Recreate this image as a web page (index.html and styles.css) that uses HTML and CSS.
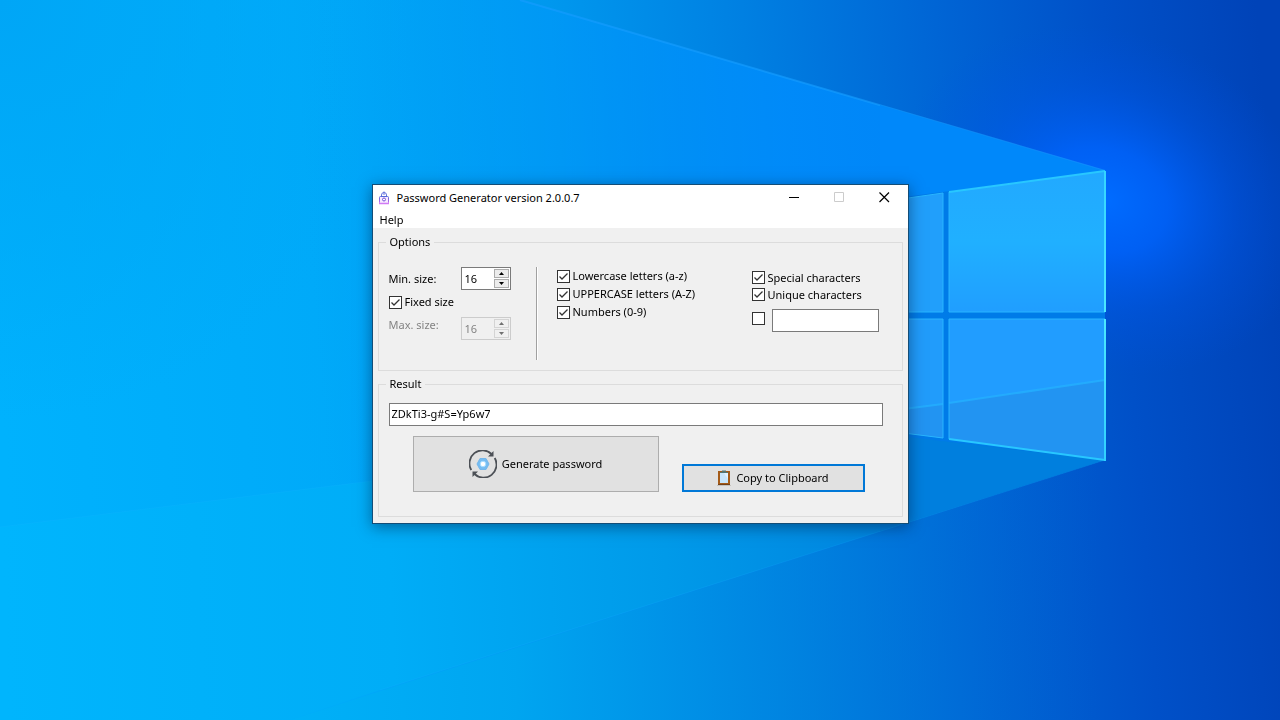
FILE: index.html
```html
<!DOCTYPE html>
<html lang="en">
<head>
<meta charset="utf-8">
<title>Password Generator</title>
<link rel="stylesheet" href="styles.css">
</head>
<body>
<svg class="wallpaper" viewBox="0 0 1280 720" preserveAspectRatio="xMidYMid slice" aria-hidden="true">
  <defs>
    <linearGradient id="sky" gradientUnits="userSpaceOnUse" x1="0" y1="400" x2="1280" y2="300">
      <stop offset="0" stop-color="#00b2fd"/>
      <stop offset=".25" stop-color="#00aaf9"/>
      <stop offset=".45" stop-color="#0098ee"/>
      <stop offset=".6" stop-color="#0080e2"/>
      <stop offset=".75" stop-color="#0065d5"/>
      <stop offset=".88" stop-color="#0050c8"/>
      <stop offset="1" stop-color="#0043b8"/>
    </linearGradient>
    <linearGradient id="beam" gradientUnits="userSpaceOnUse" x1="300" y1="0" x2="1105" y2="0">
      <stop offset="0" stop-color="#00a4ff" stop-opacity="0"/>
      <stop offset=".6" stop-color="#008eff" stop-opacity=".8"/>
      <stop offset="1" stop-color="#0084fa"/>
    </linearGradient>
    <linearGradient id="lower" gradientUnits="userSpaceOnUse" x1="0" y1="500" x2="1105" y2="460">
      <stop offset="0" stop-color="#00b5fd"/>
      <stop offset=".35" stop-color="#00adf7"/>
      <stop offset=".6" stop-color="#009ae9"/>
      <stop offset=".85" stop-color="#007fdd"/>
      <stop offset="1" stop-color="#006cd8"/>
    </linearGradient>
    <linearGradient id="floor" gradientUnits="userSpaceOnUse" x1="200" y1="0" x2="1100" y2="0">
      <stop offset="0" stop-color="#00b5fb"/>
      <stop offset=".35" stop-color="#00a6f0" stop-opacity=".9"/>
      <stop offset=".7" stop-color="#0080dd" stop-opacity=".6"/>
      <stop offset="1" stop-color="#0064d0" stop-opacity="0"/>
    </linearGradient>
    <radialGradient id="glow" gradientUnits="userSpaceOnUse" cx="1105" cy="200" r="170" gradientTransform="translate(1105 200) rotate(20) scale(1.25 1) translate(-1105 -200)">
      <stop offset="0" stop-color="#006cff"/>
      <stop offset=".3" stop-color="#0064ff" stop-opacity=".8"/>
      <stop offset=".65" stop-color="#0058ec" stop-opacity=".35"/>
      <stop offset="1" stop-color="#0050e0" stop-opacity="0"/>
    </radialGradient>
    <radialGradient id="corner" gradientUnits="userSpaceOnUse" cx="0" cy="0" r="420">
      <stop offset="0" stop-color="#00a6f6"/>
      <stop offset="1" stop-color="#00a6f6" stop-opacity="0"/>
    </radialGradient>
    <linearGradient id="pane" x1="0" y1="0" x2="0" y2="1">
      <stop offset="0" stop-color="#22a9ff"/>
      <stop offset=".5" stop-color="#20b0ff"/>
      <stop offset="1" stop-color="#209eff"/>
    </linearGradient>
    <linearGradient id="edge" x1="0" y1="0" x2="0" y2="1">
      <stop offset="0" stop-color="#34d4ff"/>
      <stop offset=".5" stop-color="#4ce8ff"/>
      <stop offset="1" stop-color="#30d0ff"/>
    </linearGradient>
  </defs>
  <rect width="1280" height="720" fill="url(#sky)"/>
  <rect width="420" height="420" fill="url(#corner)"/>
  <rect x="860" width="420" height="480" fill="url(#glow)"/>
  <path d="M290 720L1105 460V720Z" fill="url(#floor)"/>
  <path d="M0 720V527L380 480L908 409L1105 380V460L380 690L290 720Z" fill="url(#lower)"/>
  <path d="M300 0H520L1105 171V380L908 409L380 480L300 490Z" fill="url(#beam)"/>
  <path d="M520 0L1105 171" stroke="#169dff" stroke-width="2" opacity=".65"/>
  <path d="M0 527L380 480M380 690L1105 460" stroke="#18b4ff" stroke-width="1" opacity=".2"/>
  <path d="M880 180L1105 171V460L880 434Z" fill="#007be8"/>
  <path d="M880 200L1105 171L880 105Z" fill="#0088fa"/>
  <path d="M880 434L1105 460L880 531Z" fill="#007fde"/>
  <path d="M880 202L943 193V312H880Z" fill="#219ffb"/>
  <path d="M949 192L1105 171V312H949Z" fill="url(#pane)"/>
  <path d="M880 319H943V438L880 430Z" fill="#219cfb"/>
  <path d="M949 319H1105V460L949 439Z" fill="#219dff"/>
  <path d="M880 412L943 404V438L880 430ZM949 403L1105 380V460L949 439Z" fill="#2294f2"/>
  <path d="M880 412L943 404M949 403L1105 380" stroke="#24b0ff" stroke-width="2" opacity=".8"/>
  <path d="M880 202L943 193V312H880M880 319H943V438L880 430M949 192V312H1105M1105 319H949V439" fill="none" stroke="#28b5ff"/>
  <path d="M949 192L1105 171M949 439L1105 460" stroke="#28c7ff" stroke-width="2"/>
  <path d="M1104 171H1106V312H1104ZM1104 319H1106V461H1104Z" fill="url(#edge)"/>
</svg>

<main class="desktop">
  <section class="window" aria-label="Password Generator">
    <header class="titlebar">
      <svg class="app-icon" viewBox="0 0 12 14" aria-hidden="true">
        <defs><linearGradient id="lock" x1="0" y1="0" x2="0" y2="1"><stop offset="0" stop-color="#5368d8"/><stop offset="1" stop-color="#cd68f4"/></linearGradient></defs>
        <path d="M3.500 5.500V4a2.500 2.500 0 0 1 5 0v1.500M6 .5V4" fill="none" stroke="#6373dc"/>
        <rect x="1.500" y="5.500" width="9" height="7" rx="1" fill="#f8eaff" stroke="url(#lock)"/>
        <circle cx="6" cy="8.500" r="1.500" fill="#fff" stroke="#7350d8"/>
        <path d="M1 12.500H11" stroke="#d17af5" stroke-width="1.500"/>
      </svg>
      <h1 class="title">Password Generator version 2.0.0.7</h1>
      <button class="caption" type="button" aria-label="Minimize"><svg viewBox="0 0 11 11"><path d="M0 5.500H10" stroke="#000"/></svg></button>
      <button class="caption" type="button" aria-label="Maximize" disabled><svg viewBox="0 0 11 11"><path d="M.5 .5H9.500V9.500H.5Z" fill="none" stroke="#ccc"/></svg></button>
      <button class="caption" type="button" aria-label="Close"><svg viewBox="0 0 11 11"><path d="M.5 .5L10 10M10 .5L.5 10" stroke="#000" stroke-width="1.200"/></svg></button>
    </header>
    <nav class="menubar"><button class="menu" type="button">Help</button></nav>

    <form class="content">
      <fieldset class="group">
        <legend>Options</legend>
        <div class="options">
          <div class="sizes">
            <div class="size-row size-row-min">
              <label for="min">Min. size:</label>
              <div class="spinner">
                <input id="min" type="number" value="16">
                <div class="arrows">
                  <button type="button" aria-label="Increase minimum"><svg viewBox="0 0 7 4"><path d="M0 4L3.500 0L7 4Z"/></svg></button>
                  <button type="button" aria-label="Decrease minimum"><svg viewBox="0 0 7 4"><path d="M0 0L3.500 4L7 0Z"/></svg></button>
                </div>
              </div>
            </div>
            <label class="check"><input type="checkbox" checked>Fixed size</label>
            <div class="size-row size-row-max">
              <label for="max">Max. size:</label>
              <div class="spinner spinner-off">
                <input id="max" type="number" value="16" disabled>
                <div class="arrows">
                  <button type="button" aria-label="Increase maximum" disabled><svg viewBox="0 0 7 4"><path d="M0 4L3.500 0L7 4Z"/></svg></button>
                  <button type="button" aria-label="Decrease maximum" disabled><svg viewBox="0 0 7 4"><path d="M0 0L3.500 4L7 0Z"/></svg></button>
                </div>
              </div>
            </div>
          </div>
          <div class="divider"></div>
          <div class="letters">
            <label class="check"><input type="checkbox" checked>Lowercase letters (a-z)</label>
            <label class="check"><input type="checkbox" checked>UPPERCASE letters (A-Z)</label>
            <label class="check"><input type="checkbox" checked>Numbers (0-9)</label>
          </div>
          <div class="extras">
            <label class="check"><input type="checkbox" checked>Special characters</label>
            <label class="check"><input type="checkbox" checked>Unique characters</label>
            <div class="custom">
              <input type="checkbox" aria-label="Use custom characters">
              <input class="textbox" type="text" aria-label="Custom characters">
            </div>
          </div>
        </div>
      </fieldset>

      <fieldset class="group">
        <legend>Result</legend>
        <div class="result">
          <input class="textbox" type="text" aria-label="Generated password" value="ZDkTi3-g#S=Yp6w7">
          <div class="actions">
            <button class="action generate" type="button">
              <svg class="refresh" viewBox="0 0 28 28" aria-hidden="true">
                <path d="M2.300 20A13 13 0 0 1 22.500 4M25.700 8A13 13 0 0 1 5.500 24" fill="none" stroke="#4c5056" stroke-width="1.800"/>
                <path d="M24.500 1V6.500H19ZM3.500 27V21.500H9Z" fill="#4c5056"/>
                <path d="M11 8.500H17L20 14L17 19.500H11L8 14Z" fill="#74bcf2" stroke="#74b6ea" stroke-linejoin="round"/>
                <circle cx="14" cy="14" r="2.800" fill="#fff" stroke="#a5dcff"/>
              </svg>
              Generate password
            </button>
            <button class="action copy" type="button">
              <svg class="clipboard" viewBox="0 0 14 16" aria-hidden="true">
                <path d="M0 15.500H14" stroke="#c6c2bd"/>
                <rect x="1" y="1" width="12" height="14" fill="#a55b18"/>
                <path d="M1 14.500H13" stroke="#754116"/>
                <rect x="3" y="3" width="8" height="10" fill="#c8e5fa"/>
                <path d="M7 3H11V9Z" fill="#e0f2ff"/>
                <path d="M3 3V2H5V.5H9V2H11V3Z" fill="#557570"/>
              </svg>
              Copy to Clipboard
            </button>
          </div>
        </div>
      </fieldset>
    </form>
  </section>
</main>
</body>
</html>
```
FILE: styles.css
```css
* { box-sizing: border-box; }

body {
  margin: 0;
  background: #0090ee;
  color: #000;
  font: 11px/16px "Noto Sans", "Open Sans", sans-serif;
}

button, input { font: inherit; color: inherit; }

.wallpaper {
  position: fixed;
  inset: 0;
  z-index: -1;
  width: 100%;
  height: 100%;
}

.desktop {
  display: flex;
  align-items: center;
  justify-content: center;
  min-height: 100vh;
  padding-bottom: 12px;
}

.window {
  width: 100%;
  max-width: 537px;
  border: 1px solid #134d77;
  background: #f0f0f0;
  box-shadow: 0 3px 14px rgba(0, 25, 60, .5);
}

.titlebar {
  display: flex;
  align-items: center;
  height: 25px;
  padding: 0 1px 0 5px;
  background: #fff;
}

.app-icon { width: 12px; height: 14px; margin-right: 7px; }

.title {
  flex: 1;
  margin: 0;
  font-size: 11px;
  font-weight: 400;
}

.caption {
  display: flex;
  align-items: center;
  justify-content: center;
  width: 45px;
  height: 25px;
  padding: 0;
  border: 0;
  background: none;
}

.caption svg { width: 11px; height: 11px; }

.menubar { height: 18px; background: #fff; }

.menu {
  display: block;
  padding: 2px 7px 0;
  border: 0;
  background: none;
}

.content {
  display: flex;
  flex-direction: column;
  gap: 5px;
  padding: 6px 5px;
}

.group {
  min-width: 0;
  margin: 0;
  padding: 0 7px;
  border: 1px solid #dcdcdc;
}

.group legend { padding: 0 4px; }

.options {
  display: flex;
  align-items: flex-start;
  padding: 17px 16px 10px 3px;
}

.sizes {
  display: flex;
  flex-direction: column;
  width: 122px;
}

.size-row { display: flex; justify-content: space-between; }
.size-row-min { align-items: center; margin-bottom: 3px; }
.size-row-max { align-items: flex-start; margin-top: 6px; color: #838383; }

.check { display: flex; align-items: center; gap: 3px; height: 18px; }

input[type="checkbox"] {
  appearance: none;
  flex: none;
  width: 13px;
  height: 13px;
  margin: 0;
  border: 1px solid #333;
  background: #fff;
}

input[type="checkbox"]:checked {
  background: #fff url("data:image/svg+xml,%3Csvg xmlns='http://www.w3.org/2000/svg' viewBox='0 0 11 11'%3E%3Cpath d='M1.500 5.500L4 8L9.500 2.500' fill='none' stroke='%23333' stroke-width='1.300'/%3E%3C/svg%3E");
}

.spinner {
  display: flex;
  width: 50px;
  height: 23px;
  padding: 1px;
  border: 1px solid #7a7a7a;
  background: #fff;
}

.spinner input {
  appearance: textfield;
  flex: 1;
  min-width: 0;
  padding: 0 2px;
  border: 0;
  background: none;
}

.spinner input::-webkit-inner-spin-button { appearance: none; }

.arrows {
  display: flex;
  flex-direction: column;
  gap: 1px;
  width: 15px;
}

.arrows button {
  display: flex;
  flex: 1;
  align-items: center;
  justify-content: center;
  padding: 0;
  border: 1px solid #acacac;
  background: #ececec;
}

.arrows svg { width: 5px; height: 3px; }

.spinner-off { border-color: #ccc; background: #f0f0f0; }
.spinner-off .arrows button { border-color: #d4d4d4; background: #f0f0f0; }
.spinner-off path { fill: #707070; }

.divider {
  width: 2px;
  height: 93px;
  margin: 0 19px 0 25px;
  border-left: 1px solid #a0a0a0;
  border-right: 1px solid #fff;
}

.letters { flex: 1; }

.extras { width: 127px; padding-top: 2px; }
.extras .check { height: 17px; }

.custom {
  display: flex;
  align-items: flex-start;
  gap: 7px;
  margin-top: 6px;
}

.custom input[type="checkbox"] { margin-top: 3px; }

.textbox {
  width: 100%;
  min-width: 0;
  height: 23px;
  padding: 0 2px 2px;
  border: 1px solid #7a7a7a;
  background: #fff;
}

.result { padding: 11px 12px 24px 3px; }

.actions {
  display: grid;
  grid-template-columns: 246fr 183fr;
  align-items: end;
  gap: 23px;
  padding: 10px 18px 0 24px;
}

.action {
  display: flex;
  align-items: center;
  justify-content: center;
  gap: 5px;
  padding: 0;
  border: 1px solid #adadad;
  background: #e1e1e1;
}

.generate { height: 56px; }
.copy { height: 28px; border: 2px solid #0078d7; }

.refresh { width: 28px; height: 28px; }
.clipboard { width: 14px; height: 16px; }
```
